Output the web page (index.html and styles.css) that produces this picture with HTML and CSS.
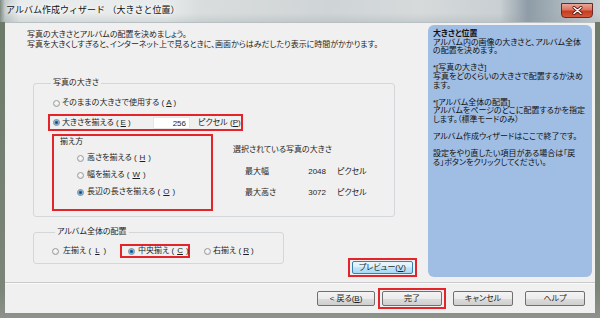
FILE: index.html
```html
<!DOCTYPE html>
<html lang="ja">

<head>
  <meta charset="UTF-8">
  <title>アルバム作成ウィザード （大きさと位置）</title>
  <link rel="stylesheet" href="styles.css">
</head>

<body>
  <div class="window">
    <!-- タイトルバー -->
    <div class="titlebar">
      <span class="title">アルバム作成ウィザード （大きさと位置）</span>
      <div class="close-btn">
        <svg width="11" height="9" viewBox="0 0 11 9">
          <path d="M2 1.5L9 7.5M9 1.5L2 7.5" stroke="#4a1510" stroke-width="3" stroke-linecap="round" />
          <path d="M2 1.5L9 7.5M9 1.5L2 7.5" stroke="#fff" stroke-width="1.6" stroke-linecap="round" />
        </svg>
      </div>
    </div>

    <div class="frame">
      <div class="client">
        <div class="page">
          <!-- 左側：設定エリア -->
          <div class="main">
            <p class="intro">写真の大きさとアルバムの配置を決めましょう。<br>写真を大きくしすぎると、インターネット上で見るときに、画面からはみだしたり表示に時間がかかります。</p>

            <fieldset class="group size-group">
              <legend>写真の大きさ</legend>
              <label class="radio-row first-opt"><span class="radio"></span>そのままの大きさで使用する (<u>A</u>)</label>

              <div class="mark resize-row">
                <label class="radio-row resize-label"><span class="radio checked"></span>大きさを揃える (<u>E</u>)</label>
                <span class="textbox">256</span>
                <span class="unit">ピクセル (<u>P</u>)</span>
              </div>

              <div class="size-detail">
                <div class="mark align-box">
                  <div class="sub-label">揃え方</div>
                  <label class="radio-row"><span class="radio"></span>高さを揃える (<u>H</u>)</label>
                  <label class="radio-row"><span class="radio"></span>幅を揃える (<u>W</u>)</label>
                  <label class="radio-row"><span class="radio checked"></span>長辺の長さを揃える (<u>O</u>)</label>
                </div>

                <div class="photo-info">
                  <div class="info-title">選択されている写真の大きさ</div>
                  <div class="info-grid">
                    <span>最大幅</span><span class="num">2048</span><span class="px">ピクセル</span>
                    <span>最大高さ</span><span class="num">3072</span><span class="px">ピクセル</span>
                  </div>
                </div>
              </div>
            </fieldset>

            <div class="bottom-row">
              <fieldset class="group place-group">
                <legend>アルバム全体の配置</legend>
                <div class="place-options">
                  <label class="radio-row opt-left"><span class="radio"></span>左揃え (<u>L</u>)</label>
                  <div class="mark opt-center">
                    <label class="radio-row"><span class="radio checked"></span>中央揃え (<u>C</u>)</label>
                  </div>
                  <label class="radio-row opt-right"><span class="radio"></span>右揃え (<u>R</u>)</label>
                </div>
              </fieldset>
              <div class="mark preview-mark">
                <button class="btn preview-btn">プレビュー(<u>V</u>)</button>
              </div>
            </div>
          </div>

          <!-- 右側：説明パネル -->
          <div class="help-panel">
            <p><b>大きさと位置</b><br>アルバム内の画像の大きさと、アルバム全体<br>の配置を決めます。</p>
            <p>*[写真の大きさ]<br>写真をどのくらいの大きさで配置するか決め<br>ます。</p>
            <p>*[アルバム全体の配置]<br>アルバムをページのどこに配置するかを指定<br>します。（標準モードのみ）</p>
            <p>アルバム作成ウィザードはここで終了です。</p>
            <p>設定をやり直したい項目がある場合は「戻<br>る」ボタンをクリックしてください。</p>
          </div>
        </div>

        <!-- 下部ボタン -->
        <div class="footer">
          <button class="btn back-btn">&lt; 戻る(<u>B</u>)</button>
          <div class="mark finish-mark">
            <button class="btn">完了</button>
          </div>
          <button class="btn cancel-btn">キャンセル</button>
          <button class="btn help-btn">ヘルプ</button>
        </div>
      </div>
    </div>
  </div>
</body>

</html>
```

FILE: styles.css
```css
/* リセット */
* {
  margin: 0;
  padding: 0;
  box-sizing: border-box;
}

body {
  width: 600px;
  height: 318px;
  overflow: hidden;
  font-family: "Liberation Sans", "Noto Sans CJK JP", sans-serif;
  font-size: 8px;
  line-height: 10px;
  font-feature-settings: "palt";
  color: #1e1e1e;
  background: #6e7c6c;
}

u {
  text-decoration: underline;
  text-underline-offset: 1px;
}

.window {
  display: flex;
  flex-direction: column;
  height: 318px;
}

/* タイトルバー（Aero ガラス風） */
.titlebar {
  height: 22px;
  display: flex;
  justify-content: space-between;
  align-items: flex-start;
  background:
    linear-gradient(rgba(255, 255, 255, 0) 60%, rgba(150, 160, 165, 0.25)),
    linear-gradient(90deg, #7d8a80 0, #c4cbcb 5px, #e9ecec 20px, #e8ebeb 165px, #d9dddd 200px, #cfd4d6 330px, #d6dadb 420px, #c9cfd2 500px, #8e9ca7 528px, #a2aeb6 552px, #c9cfd2 600px);
}

.title {
  padding: 5px 0 0 6px;
  font-size: 9px;
  line-height: 11px;
  font-feature-settings: normal;
  color: #111;
  text-shadow: 0 0 4px #fff, 0 0 6px #fff;
}

.close-btn {
  width: 32px;
  height: 15px;
  margin: 3px 7px 0 0;
  display: flex;
  align-items: center;
  justify-content: center;
  border: 1px solid #6a2a22;
  border-radius: 0 0 4px 4px;
  background: linear-gradient(#eaa697 0, #dd735f 45%, #c63b1f 55%, #d4583c 100%);
}

.frame {
  flex: 1;
  display: flex;
  padding: 0 5px 5px;
  background: linear-gradient(#6c7a69, #7b8578 90%, #8d928b);
}

.client {
  flex: 1;
  display: flex;
  flex-direction: column;
  background: #f0f0f0;
  border-top: 1px solid #b9c0c3;
}

.page {
  flex: 1;
  display: flex;
}

/* 左側 */
.main {
  width: 423px;
}

.intro {
  margin: 7px 0 0 22px;
}

.group {
  border: 1px solid #d3d7da;
  border-radius: 3px;
}

.group legend {
  margin-left: 3px;
  padding: 0 2px;
  line-height: 10px;
}

.size-group {
  width: 362px;
  margin: 28px 0 0 28px;
  padding: 9px 0 5px 14px;
}

.radio-row {
  display: flex;
  align-items: center;
  gap: 2px;
  height: 12px;
  white-space: nowrap;
}

.radio {
  flex: none;
  width: 7px;
  height: 7px;
  border-radius: 50%;
  border: 1px solid #9a9c9c;
  background: radial-gradient(circle at 50% 40%, #ffffff, #d8d8d8);
}

.radio.checked {
  border-color: #7c8a96;
  background: radial-gradient(circle, #163f66 0, #2b78b3 1.4px, #8fc0e2 2.2px, #e6e8ea 3px);
}

.first-opt {
  margin-left: 5px;
}

/* 赤枠（強調） */
.mark {
  border: 2px solid #e3242b;
}

.resize-row {
  width: 195px;
  height: 17px;
  margin-top: 5px;
  display: flex;
  align-items: center;
  padding-left: 3px;
}

.resize-label {
  width: 100px;
}

.textbox {
  width: 37px;
  height: 12px;
  padding-right: 3px;
  text-align: right;
  line-height: 11px;
  background: #fff;
  border: 1px solid #e4e6e8;
}

.unit {
  margin-left: 8px;
  white-space: nowrap;
}

.size-detail {
  display: flex;
  margin-top: 3px;
}

.align-box {
  width: 161px;
  height: 77px;
  margin-left: 4px;
  padding: 1px 0 0 6px;
}

.align-box .radio-row {
  margin: 5px 0 0 17px;
  gap: 3px;
}

.photo-info {
  margin-left: 20px;
  padding-top: 11px;
}

.info-grid {
  display: grid;
  grid-template-columns: 45px 36px auto;
  row-gap: 11px;
  margin-top: 12px;
  padding-left: 12px;
}

.info-grid .num {
  text-align: right;
}

.info-grid .px {
  padding-left: 11px;
}

.bottom-row {
  display: flex;
  align-items: flex-start;
  margin-top: 10px;
}

.place-group {
  width: 251px;
  margin-left: 28px;
  padding: 7px 0 5px 18px;
}

.place-options {
  display: flex;
  align-items: center;
  height: 14px;
}

.opt-left {
  width: 68px;
  gap: 4px;
}

.opt-center {
  width: 70px;
  height: 14px;
  display: flex;
  align-items: center;
  padding-left: 6px;
}

.opt-center .radio-row {
  gap: 3px;
}

.opt-right {
  margin-left: 14px;
}

.preview-mark {
  margin: 31px 0 0 64px;
  padding: 1px 2px;
}

/* ボタン */
.btn {
  display: block;
  height: 15px;
  font: inherit;
  line-height: 13px;
  color: #1e1e1e;
  border: 1px solid #707070;
  border-radius: 2px;
  background: linear-gradient(#f4f4f4 0, #ebebeb 50%, #dcdcdc 50%, #cfcfcf 100%);
}

.preview-btn {
  width: 61px;
  height: 13px;
  line-height: 11px;
  border-color: #3c7fb1;
  background: linear-gradient(#eaf6fd 0, #d9f0fc 50%, #bee6fd 50%, #a7d9f5 100%);
}

/* 説明パネル */
.help-panel {
  width: 164px;
  height: 252px;
  margin: 2px 3px 0 0;
  padding: 5px 4px 0 5px;
  border-radius: 6px;
  background: #a0bde3;
  line-height: 8.6px;
  white-space: nowrap;
  color: #111;
}

.help-panel p + p {
  margin-top: 8.6px;
}

/* 下部 */
.footer {
  height: 31px;
  display: flex;
  align-items: center;
  justify-content: flex-end;
  padding: 1px 10px 0 0;
  border-top: 1px solid #c9c9c9;
  box-shadow: inset 0 1px #fafafa;
}

.back-btn {
  width: 58px;
}

.finish-mark {
  margin-left: 3px;
  padding: 1px 2px;
}

.finish-mark .btn {
  width: 60px;
}

.cancel-btn {
  width: 60px;
  margin-left: 7px;
}

.help-btn {
  width: 60px;
  margin-left: 12px;
}
```
